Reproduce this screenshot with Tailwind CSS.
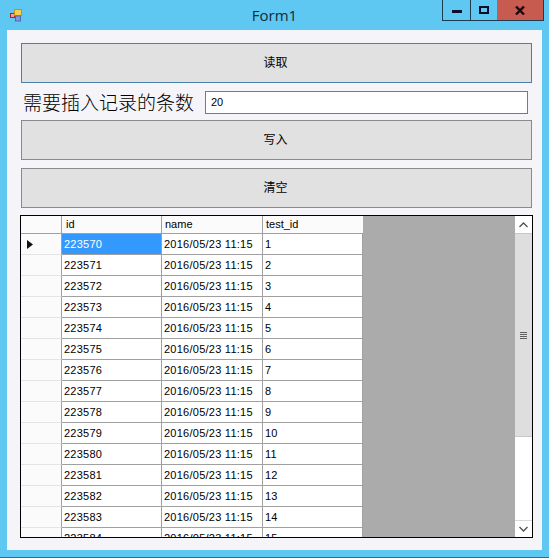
<!DOCTYPE html>
<html lang="zh">
  <head>
    <meta charset="UTF-8" />
    <title>Form1</title>
    <script src="https://cdn.jsdelivr.net/npm/@tailwindcss/browser@4"></script>
  </head>
  <body class="w-[549px] h-[559px] overflow-hidden bg-white font-['Liberation_Sans','Noto_Sans_CJK_JP',sans-serif] text-[11px] text-black">
    <div class="h-[557px] bg-[#5ec8f2] border-b border-[#2b6f8f] box-content flex flex-col">
      <!-- title bar -->
      <div class="h-[30px] shrink-0 relative flex items-start">
        <svg class="ml-[10px] mt-[8px]" width="14" height="14" viewBox="0 0 14 14">
          <rect x="0.5" y="5.5" width="4" height="4" fill="#e8a0a0" stroke="#b02020" />
          <rect x="4.5" y="1.5" width="7" height="6" fill="#f8d048" stroke="#c09020" />
          <rect x="5.5" y="8" width="5" height="5" fill="#8098e0" stroke="#5068b0" />
        </svg>
        <div class="absolute left-0 right-0 top-[5px] text-center text-[15px] leading-[20px] text-[#102a3a] font-['Open_Sans',sans-serif]">Form1</div>
        <div class="ml-auto mr-[5px] flex h-[21px] border border-[#1c3a50] border-t-0">
          <div class="w-[28px] border-r border-[#1c3a50] flex items-center justify-center">
            <div class="w-[10px] h-[3px] bg-[#06102a] mt-[3px]"></div>
          </div>
          <div class="w-[26px] flex items-center justify-center">
            <div class="w-[10px] h-[8px] border-2 border-[#06102a]"></div>
          </div>
          <div class="w-[46px] bg-[#c75b50] flex items-center justify-center">
            <svg width="10" height="9" viewBox="0 0 10 9"><path d="M1 0.5 L9 8.5 M9 0.5 L1 8.5" stroke="#1a0a10" stroke-width="2.4" /></svg>
          </div>
        </div>
      </div>
      <!-- client area -->
      <div class="mx-[7px] h-[520px] bg-[#f5f4f8] px-[14px] pt-[13px]">
        <button class="block w-[511px] h-[40px] bg-[#e1e1e1] border border-[#4a7fa8] text-[12px] pr-[2px]">读取</button>
        <div class="h-[37px] flex items-center">
          <span class="text-[19px] leading-[24px] ml-[2px] w-[182px] whitespace-nowrap text-black font-['Noto_Sans_CJK_SC',sans-serif] font-light">需要插入记录的条数</span>
          <input value="20" class="ml-[1px] w-[325px] h-[23px] bg-white border border-[#7a7a7a] px-[5px] text-[11px] mb-[-1px] outline-none" />
        </div>
        <button class="block w-[511px] h-[40px] bg-[#e1e1e1] border border-[#8a8a8a] text-[12px] pr-[2px]">写入</button>
        <button class="block w-[511px] h-[40px] mt-[8px] bg-[#e1e1e1] border border-[#8a8a8a] text-[12px] pr-[2px]">清空</button>

        <!-- data grid -->
        <div class="mt-[7px] ml-[-1px] w-[513px] h-[323px] border border-black bg-[#ababab] flex overflow-hidden">
          <div id="grid" class="w-[494px] shrink-0 h-full overflow-hidden">
            <div class="flex h-[18px] w-[342px] bg-[#fbfbfb] border-b border-[#a0a0a0]">
              <div class="w-[41px] border-r border-[#a0a0a0]"></div>
              <div class="w-[100px] pl-[4px] leading-[17px] border-r border-[#a0a0a0]">id</div>
              <div class="w-[101px] pl-[3px] leading-[17px] border-r border-[#a0a0a0]">name</div>
              <div class="w-[100px] pl-[3px] leading-[17px]">test_id</div>
            </div>
            <div id="rows"></div>
          </div>
          <!-- scrollbar -->
          <div class="w-[17px] h-full flex flex-col bg-white">
            <div class="h-[17px] flex items-center justify-center">
              <svg width="9" height="6" viewBox="0 0 9 6"><path d="M0.5 5 L4.5 1 L8.5 5" fill="none" stroke="#505050" stroke-width="1.3" /></svg>
            </div>
            <div class="h-[204px] bg-[#dedede] border-y border-[#c8c8c8] flex flex-col items-center justify-center gap-[1px]">
              <div class="w-[7px] h-[1px] bg-[#606060]"></div>
              <div class="w-[7px] h-[1px] bg-[#606060]"></div>
              <div class="w-[7px] h-[1px] bg-[#606060]"></div>
              <div class="w-[7px] h-[1px] bg-[#606060]"></div>
            </div>
            <div class="flex-1"></div>
            <div class="h-[17px] border-t border-[#d8d8d8] flex items-center justify-center">
              <svg width="9" height="6" viewBox="0 0 9 6"><path d="M0.5 1 L4.5 5 L8.5 1" fill="none" stroke="#505050" stroke-width="1.3" /></svg>
            </div>
          </div>
        </div>
      </div>
    </div>

    <script>
      // build the grid rows from the first id
      const rows = document.getElementById("rows");
      for (let i = 0; i < 15; i++) {
        const selected = i === 0;
        const row = document.createElement("div");
        row.className = "flex h-[21px] w-[342px] bg-white tracking-[0.25px]";
        row.innerHTML = `
          <div class="w-[41px] bg-[#fbfbfb] border-r border-b border-r-[#a0a0a0] border-b-[#e4e4e4] flex items-center">
            ${selected ? '<svg class="ml-[6px]" width="6" height="9" viewBox="0 0 6 9"><path d="M0 0 L6 4.5 L0 9 Z" fill="#111" /></svg>' : ""}
          </div>
          <div class="w-[100px] pl-[2px] leading-[20px] border-r border-b border-[#a0a0a0] ${selected ? "bg-[#3399ff] text-white" : ""}">${223570 + i}</div>
          <div class="w-[101px] pl-[2px] leading-[20px] border-r border-b border-[#a0a0a0] whitespace-nowrap">2016/05/23 11:15</div>
          <div class="w-[100px] pl-[2px] leading-[20px] border-r border-b border-[#a0a0a0]">${i + 1}</div>
        `;
        rows.appendChild(row);
      }
    </script>
  </body>
</html>
